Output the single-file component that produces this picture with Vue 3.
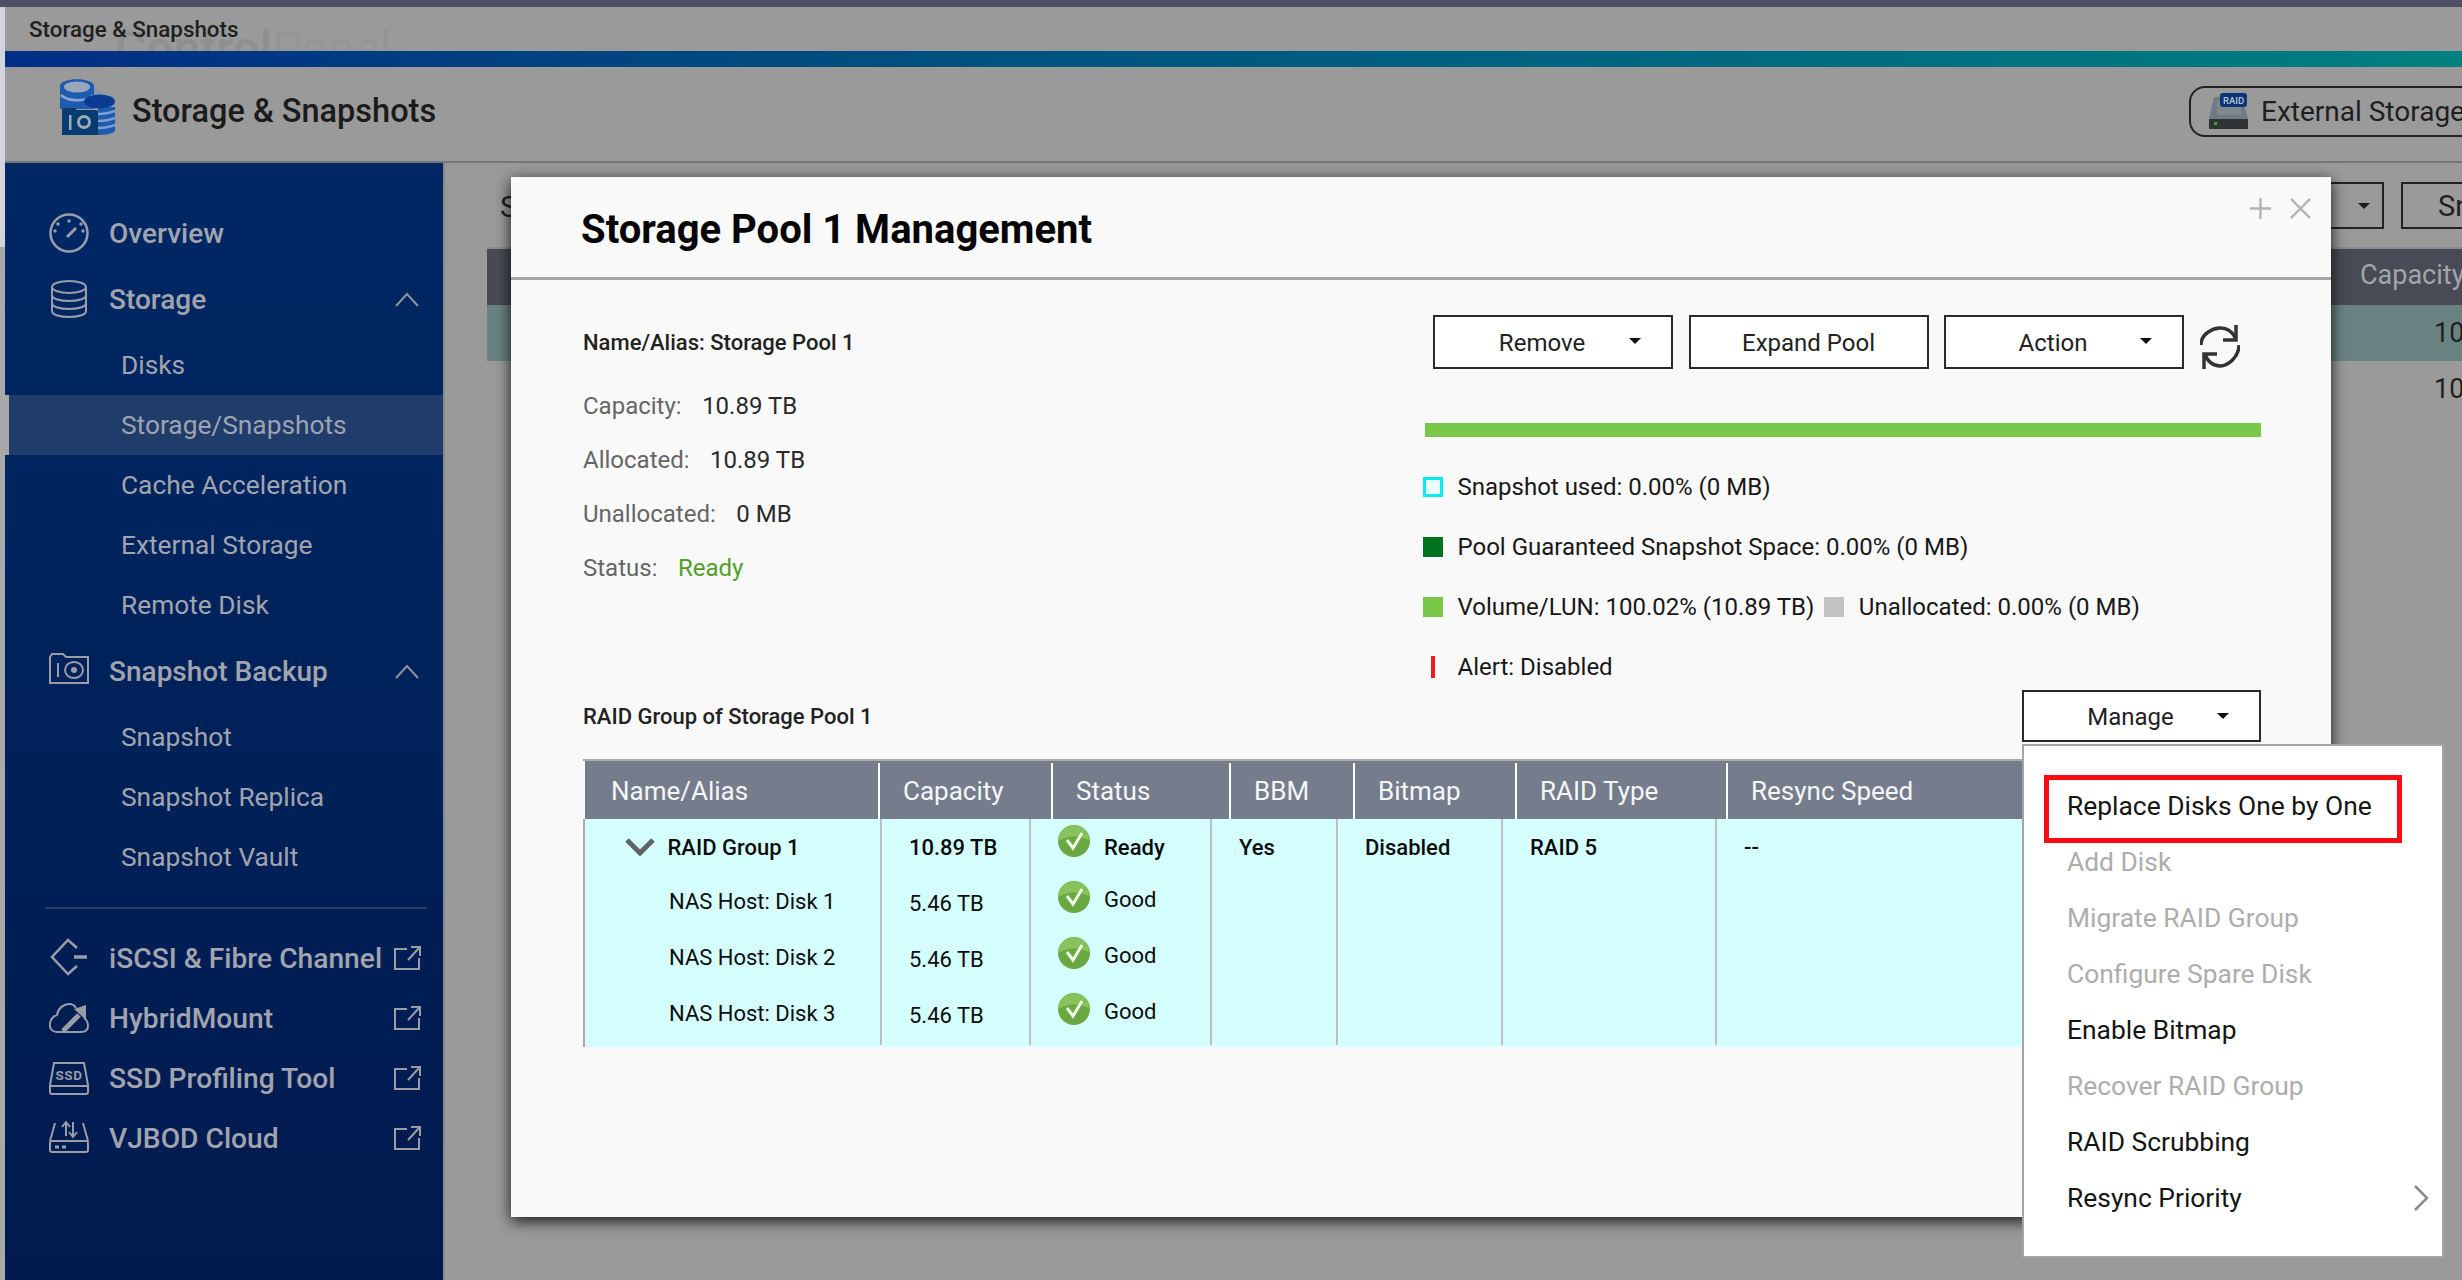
<template>
<div class="screen">
  <div class="top-strip"></div>
  <div class="desk">
    <div class="edge"></div>
    <div class="window">
      <div class="title-bar">
        <span class="watermark"><b>Control</b>Panel</span>
        <span class="title-text">Storage &amp; Snapshots</span>
      </div>
      <div class="accent"></div>
      <header class="app-head">
        <svg class="logo" viewBox="0 0 55 56">
          <path d="M30 6 L55 20 V30 H30 Z" fill="#8b98ab"/>
          <path d="M0 7 C0 -2 34 -2 34 7 V30 H0 Z" fill="#1d5bb0"/>
          <ellipse cx="17" cy="8" rx="13" ry="5.5" fill="#9aa6ba"/>
          <path d="M1 16 C8 23 27 23 33 16" stroke="#8ba5cf" stroke-width="2.5" fill="none"/>
          <path d="M38 28 H55 V52 C52 55 45 56 38 56 Z" fill="#1d5bb0"/>
          <path d="M38 35 C44 35 50 34 55 32 M38 42 C44 42 50 41 55 39 M38 49 C44 49 50 48 55 46" stroke="#7d9fce" stroke-width="2.5" fill="none"/>
          <ellipse cx="39.5" cy="22.5" rx="15.5" ry="7" fill="#0a3c94"/>
          <path d="M2 31 C2 30 3 29 4 29 H15 L17 31 H36 C37 31 38 32 38 33 V56 H2 Z" fill="#063c70"/>
          <rect x="9" y="36" width="2.5" height="15" fill="#a0aab5"/>
          <circle cx="24" cy="43" r="5.5" fill="none" stroke="#a0aab5" stroke-width="3"/>
        </svg>
        <span class="app-name">Storage &amp; Snapshots</span>
        <div class="ext-btn">
          <svg class="raid-icon" viewBox="0 0 40 36">
            <path d="M5 4 H33 L39 26 H0 Z" fill="#6f7b82"/>
            <rect x="8" y="8" width="24" height="14" fill="#7f8a8f"/>
            <rect x="0" y="26" width="39" height="10" fill="#2f3336"/>
            <rect x="5" y="29" width="3" height="3" fill="#39a82a"/>
            <rect x="11" y="0" width="27" height="14" rx="3" fill="#0c3577"/>
            <text x="24.5" y="11" class="raid-text">RAID</text>
          </svg>
          <span>External Storage</span>
        </div>
      </header>
      <div class="app-body">
        <nav class="sidebar">
          <template v-for="item in navItems" :key="item.label">
            <div v-if="item.kind === 'rule'" class="nav-rule"></div>
            <div v-else class="nav-row" :class="[item.kind, { active: item.active }]">
              <svg v-if="item.icon" class="nav-icon" viewBox="0 0 40 40" v-html="icons[item.icon]"></svg>
              <span class="nav-label">{{ item.label }}</span>
              <svg v-if="item.open" class="nav-chevron" viewBox="0 0 24 15"><path d="M1 14 L12 2 L23 14" fill="none" stroke="#8d92a1" stroke-width="2"/></svg>
              <svg v-if="item.ext" class="nav-ext" viewBox="0 0 28 26"><path d="M14 4 H2 V24 H26 V13 M15 15 L26 3 M18 2 H27 V11" fill="none" stroke="#9a9da6" stroke-width="2"/></svg>
            </div>
          </template>
        </nav>
        <main class="content">
          <div class="content-tools">
            <span class="tools-s">S</span>
            <div class="tool-box"><i class="caret"></i></div>
            <div class="tool-box wide">Sn</div>
          </div>
          <div class="back-head"><span>Capacity</span></div>
          <div class="back-row selected"><span>10.89 TB</span></div>
          <div class="back-row"><span>10.89 TB</span></div>
        </main>
      </div>
    </div>
  </div>

  <section class="modal">
    <div class="modal-head">
      <h1>Storage Pool 1 Management</h1>
      <div class="modal-ctrl">
        <svg viewBox="0 0 24 24"><path d="M12 1 V23 M1 12 H23" stroke="#b4b4b4" stroke-width="2.5"/></svg>
        <svg viewBox="0 0 24 24"><path d="M2 2 L22 22 M22 2 L2 22" stroke="#b4b4b4" stroke-width="2.5"/></svg>
      </div>
    </div>
    <div class="pool-top">
      <div class="info">
        <div class="info-name">Name/Alias: Storage Pool 1</div>
        <div v-for="row in poolInfo" :key="row.label" class="info-row">
          <span class="info-label">{{ row.label }}</span>
          <span :class="row.cls">{{ row.value }}</span>
        </div>
      </div>
      <div class="usage">
        <div class="actions">
          <button class="btn">Remove<i class="caret"></i></button>
          <button class="btn plain">Expand Pool</button>
          <button class="btn">Action<i class="caret"></i></button>
          <svg class="refresh" viewBox="0 0 40 46">
            <path d="M1 22 C1 10 14 5 20 5 C27 5 33 9 36 16" fill="none" stroke="#333" stroke-width="3.5"/>
            <path d="M36 2 V17 H23" fill="none" stroke="#333" stroke-width="3.5"/>
            <path d="M39 22 C39 34 28 43 20 43 C13 43 7 38 5 31" fill="none" stroke="#333" stroke-width="3.5"/>
            <path d="M4 46 V31 H17" fill="none" stroke="#333" stroke-width="3.5"/>
          </svg>
        </div>
        <div class="bar"></div>
        <div class="legend">
          <div class="legend-row"><i class="swatch snap"></i><span>Snapshot used: 0.00% (0 MB)</span></div>
          <div class="legend-row"><i class="swatch guar"></i><span>Pool Guaranteed Snapshot Space: 0.00% (0 MB)</span></div>
          <div class="legend-row">
            <i class="swatch vol"></i><span>Volume/LUN: 100.02% (10.89 TB)</span>
            <i class="swatch unal"></i><span>Unallocated: 0.00% (0 MB)</span>
          </div>
          <div class="legend-row"><i class="swatch alert"></i><span>Alert: Disabled</span></div>
        </div>
      </div>
    </div>
    <div class="raid-bar">
      <span class="info-name">RAID Group of Storage Pool 1</span>
      <button class="btn manage">Manage<i class="caret"></i></button>
    </div>
    <div class="raid-table">
      <div class="thead">
        <div v-for="h in headers" :key="h" class="th">{{ h }}</div>
      </div>
      <div class="tbody">
        <div class="col">
          <div class="cell group"><svg class="tree" viewBox="0 0 30 19"><path d="M2 2 L15 15 L28 2" fill="none" stroke="#5f6468" stroke-width="5"/></svg>RAID Group 1</div>
          <div v-for="d in disks" :key="d.name" class="cell disk">{{ d.name }}</div>
        </div>
        <div class="col">
          <div class="cell strong">10.89 TB</div>
          <div v-for="d in disks" :key="d.name" class="cell">{{ d.size }}</div>
        </div>
        <div class="col">
          <div class="cell state strong"><svg class="ok" viewBox="0 0 32 32" v-html="okIcon"></svg><span>Ready</span></div>
          <div v-for="d in disks" :key="d.name" class="cell state good"><svg class="ok" viewBox="0 0 32 32" v-html="okIcon"></svg><span>Good</span></div>
        </div>
        <div v-for="v in restCols" :key="v" class="col">
          <div class="cell strong">{{ v }}</div>
        </div>
        <div class="col last"></div>
      </div>
    </div>

    <div class="menu">
      <div v-for="m in manageMenu" :key="m.label" class="menu-item" :class="{ off: m.off }">
        {{ m.label }}
        <svg v-if="m.more" class="menu-more" viewBox="0 0 16 28"><path d="M2 2 L14 14 L2 26" fill="none" stroke="#8a8a8a" stroke-width="2.5"/></svg>
      </div>
      <div class="callout"></div>
    </div>
  </section>
</div>
</template>

<script setup>
const navItems = [
  { kind: 'head', label: 'Overview', icon: 'gauge' },
  { kind: 'head', label: 'Storage', icon: 'db', open: true },
  { kind: 'sub', label: 'Disks' },
  { kind: 'sub', label: 'Storage/Snapshots', active: true },
  { kind: 'sub', label: 'Cache Acceleration' },
  { kind: 'sub', label: 'External Storage' },
  { kind: 'sub', label: 'Remote Disk' },
  { kind: 'head', label: 'Snapshot Backup', icon: 'snap', open: true },
  { kind: 'sub', label: 'Snapshot' },
  { kind: 'sub', label: 'Snapshot Replica' },
  { kind: 'sub', label: 'Snapshot Vault' },
  { kind: 'rule', label: 'rule' },
  { kind: 'tool', label: 'iSCSI & Fibre Channel', icon: 'iscsi', ext: true },
  { kind: 'tool', label: 'HybridMount', icon: 'cloud', ext: true },
  { kind: 'tool', label: 'SSD Profiling Tool', icon: 'ssd', ext: true },
  { kind: 'tool', label: 'VJBOD Cloud', icon: 'vjbod', ext: true },
]

const stroke = '#9a9da8'
const st = `fill="none" stroke="${stroke}" stroke-width="2"`
const icons = {
  gauge: `<circle cx="20" cy="20" r="18.5" fill="none" stroke="${stroke}" stroke-width="2.5"/><g fill="${stroke}"><circle cx="20" cy="8" r="1.7"/><circle cx="9" cy="11" r="1.7"/><circle cx="32" cy="11" r="1.7"/><circle cx="6" cy="18" r="1.7"/><circle cx="34" cy="18" r="1.7"/></g><path d="M18 24L27 15" fill="none" stroke="${stroke}" stroke-width="3"/>`,
  db: `<ellipse cx="20" cy="8" rx="17" ry="6" ${st}/><path d="M3 8V32C3 40 37 40 37 32V8M3 16C3 24 37 24 37 16M3 24C3 32 37 32 37 24" ${st}/>`,
  snap: `<path d="M1 6V32H39V6H17L14 3H3L1 6Z" ${st}/><path d="M9 12V26" ${st}/><ellipse cx="25" cy="19" rx="9" ry="8" ${st}/><circle cx="25" cy="19" r="3" fill="${stroke}"/>`,
  iscsi: `<path d="M28 10L19 2L3 19L19 36L28 28" fill="none" stroke="${stroke}" stroke-width="2.5"/><path d="M25 19H38" fill="none" stroke="${stroke}" stroke-width="3.5"/>`,
  cloud: `<path d="M27 10C26 8 23 6 20 6C15 6 9 10 8 17C5 18 2 20 1 25C0 29 2 34 9 34H32C36 34 39 32 39 28C39 25 38 22 35 20" ${st}/><path d="M14 33L30 17" stroke="${stroke}" stroke-width="5"/><path d="M25 11L37 7V22Z" fill="${stroke}"/>`,
  ssd: `<path d="M5 5H35L39 27V34C39 35 38 36 37 36H3C2 36 1 35 1 34V27Z" ${st}/><path d="M1 28H39" ${st}/><text x="20" y="22" class="ssd-text">SSD</text>`,
  vjbod: `<path d="M6 5L1 23M34 5L39 23" ${st}/><rect x="1" y="23" width="38" height="11" rx="2" ${st}/><path d="M6 29H10M13 29H17" fill="none" stroke="${stroke}" stroke-width="3"/><path d="M17 18V5M13 9L17 4L21 9M24 4V18M20 14L24 19L28 14" ${st}/>`,
}

const okIcon = '<circle cx="16" cy="16" r="16" fill="#6aa842"/><path d="M0 16A16 16 0 0 1 32 16C22 10 10 10 0 16Z" fill="#86c25e"/><path d="M9 15L15 23L24 8" fill="none" stroke="#f2fbe8" stroke-width="3"/>'

const poolInfo = [
  { label: 'Capacity:', value: '10.89 TB' },
  { label: 'Allocated:', value: '10.89 TB' },
  { label: 'Unallocated:', value: '0 MB' },
  { label: 'Status:', value: 'Ready', cls: 'ready' },
]

const headers = ['Name/Alias', 'Capacity', 'Status', 'BBM', 'Bitmap', 'RAID Type', 'Resync Speed']
const disks = [
  { name: 'NAS Host: Disk 1', size: '5.46 TB' },
  { name: 'NAS Host: Disk 2', size: '5.46 TB' },
  { name: 'NAS Host: Disk 3', size: '5.46 TB' },
]
const restCols = ['Yes', 'Disabled', 'RAID 5', '--']

const manageMenu = [
  { label: 'Replace Disks One by One' },
  { label: 'Add Disk', off: true },
  { label: 'Migrate RAID Group', off: true },
  { label: 'Configure Spare Disk', off: true },
  { label: 'Enable Bitmap' },
  { label: 'Recover RAID Group', off: true },
  { label: 'RAID Scrubbing' },
  { label: 'Resync Priority', more: true },
]
</script>

<style scoped>
.screen {
  position: relative;
  width: 2462px;
  height: 1280px;
  overflow: hidden;
  display: flex;
  flex-direction: column;
  background: #9a9a9a;
  font-family: Roboto, "Liberation Sans", sans-serif;
  color: #1b1b1b;
}
.top-strip { height: 7px; background: #4f5068; flex: none; }
.desk { flex: 1; display: flex; min-height: 0; }
.edge { width: 5px; flex: none; background: linear-gradient(#d3d4dc 0, #d3d4dc 240px, #a9a9a9 240px); }
.window { flex: 1; display: flex; flex-direction: column; min-width: 0; }

.title-bar {
  position: relative;
  height: 44px;
  flex: none;
  display: flex;
  align-items: center;
  padding-left: 24px;
  overflow: hidden;
}
.title-text { position: relative; font-size: 22.4px; font-weight: 500; color: #1f1f1f; }
.watermark {
  position: absolute;
  left: 110px;
  top: 14px;
  font-size: 48px;
  line-height: 56px;
  color: #959595;
  white-space: nowrap;
}
.watermark b { color: #8f8f8f; font-weight: 500; }
.accent { height: 16px; flex: none; background: linear-gradient(90deg, #002d85, #004a80 30%, #008080 100%); }
.app-head {
  display: flex;
  align-items: center;
  padding: 0 0 6px 55px;
  border-bottom: 2px solid #777;
  box-sizing: border-box;
  height: 96px;
  flex: none;
}
.logo { width: 55px; height: 56px; flex: none; margin-bottom: 8px; }
.app-name { margin-left: 17px; font-size: 32.5px; font-weight: 500; color: #1b1b1b; }
.ext-btn {
  margin-left: auto;
  margin-right: -60px;
  width: 333px;
  height: 51px;
  box-sizing: border-box;
  border: 2px solid #222;
  border-radius: 16px 0 0 16px;
  display: flex;
  align-items: center;
  padding-left: 18px;
  font-size: 28px;
  color: #1f1f1f;
}
.raid-icon { width: 40px; height: 36px; margin-right: 12px; flex: none; }
.raid-text { font-size: 9.5px; font-weight: 500; fill: #b9c4dc; text-anchor: middle; font-family: Roboto, sans-serif; }

.app-body { flex: 1; display: flex; min-height: 0; }
.sidebar {
  width: 438px;
  flex: none;
  box-sizing: border-box;
  padding-top: 40px;
  background: linear-gradient(#002865, #001a4e);
  color: #a2a4ad;
}
.nav-row { display: flex; align-items: center; height: 60px; box-sizing: border-box; }
.nav-row.head { margin-bottom: 6px; padding-left: 44px; font-size: 28px; font-weight: 500; }
.nav-row.sub { padding-left: 116px; font-size: 26.3px; }
.nav-row.sub + .nav-row.head { margin-top: 6px; }
.nav-row.tool { padding-left: 44px; font-size: 28.2px; font-weight: 500; }
.nav-row.active { background: #203c6b; border-left: 4px solid #a8a8a8; padding-left: 112px; color: #9ea3b0; }
.nav-icon { width: 40px; height: 40px; flex: none; margin-right: 20px; }
.nav-label { white-space: nowrap; }
.nav-chevron { width: 24px; height: 15px; margin-left: auto; margin-right: 24px; }
.nav-ext { width: 28px; height: 26px; margin-left: auto; margin-right: 22px; flex: none; }
.nav-rule { height: 2px; margin: 20px 16px 19px 40px; background: #2a3a5e; }
:deep(.ssd-text) { font-size: 13.5px; font-weight: 700; fill: #9a9da8; text-anchor: middle; letter-spacing: 0.5px; font-family: Roboto, sans-serif; }

.content { flex: 1; min-width: 0; padding-left: 42px; border-left: 2px solid #8a8a8a; }
.content-tools { height: 84px; display: flex; align-items: flex-start; padding-top: 19px; box-sizing: border-box; }
.tools-s { font-size: 30px; margin-left: 13px; margin-top: 7px; color: #1f1f1f; }
.tool-box {
  margin-left: auto;
  width: 120px;
  height: 47px;
  box-sizing: border-box;
  border: 2px solid #222;
  display: flex;
  align-items: center;
  justify-content: flex-end;
  padding-right: 10px;
}
.tool-box .caret { position: static; border-top-color: #1b1b1b; margin-right: 2px; }
.tool-box.wide {
  margin-left: 17px;
  margin-right: -70px;
  width: 131px;
  justify-content: flex-start;
  padding-left: 35px;
  font-size: 29px;
  color: #1f1f1f;
}
.back-head {
  height: 58px;
  box-sizing: border-box;
  background: #484b55;
  color: #a4a5a9;
  font-size: 27px;
  display: flex;
  align-items: center;
  padding: 0 0 5px 1873px;
  border-top: 2px solid #8a8a8a;
  white-space: nowrap;
}
.back-row {
  height: 56px;
  box-sizing: border-box;
  display: flex;
  align-items: center;
  padding: 0 0 0 1947px;
  font-size: 27px;
  white-space: nowrap;
  color: #1f1f1f;
}
.back-row.selected { background: #6a8382; }

.modal {
  position: absolute;
  left: 511px;
  top: 177px;
  width: 1820px;
  height: 1040px;
  background: #f9f9f9;
  box-shadow: 0 4px 14px rgba(0, 0, 0, 0.85);
}
.modal-head {
  height: 100px;
  border-bottom: 3px solid #a5a5a5;
  display: flex;
  align-items: flex-start;
  justify-content: space-between;
  box-sizing: content-box;
}
.modal-head h1 {
  margin: 29px 0 0 70px;
  font-size: 40px;
  line-height: 48px;
  font-weight: 700;
  color: #050505;
}
.modal-ctrl { display: flex; gap: 17px; margin: 20px 19px 0 0; }
.modal-ctrl svg { width: 23px; height: 23px; }

.pool-top { height: 410px; display: flex; padding-left: 72px; }
.info { width: 842px; flex: none; padding-top: 35px; font-size: 24px; }
.info-name { font-size: 22px; font-weight: 500; color: #222; }
.info > .info-name { height: 54px; display: flex; align-items: center; margin-bottom: 10px; white-space: nowrap; }
.info-row { height: 54px; display: flex; align-items: center; gap: 20.5px; color: #2a2a2a; }
.info-label { color: #666; }
.ready { color: #52a028; }
.usage { width: 836px; flex: none; padding-top: 35px; }
.actions { display: flex; gap: 15.5px; padding-left: 8px; align-items: flex-start; height: 54px; }
.btn {
  position: relative;
  width: 240px;
  height: 54px;
  box-sizing: border-box;
  border: 2px solid #2a2a2a;
  background: #fff;
  font: 400 24px Roboto, sans-serif;
  color: #222;
  display: flex;
  align-items: center;
  justify-content: center;
  padding: 2px 22px 0 0;
  flex: none;
}
.btn.plain { padding: 2px 0 0; }
.caret {
  position: absolute;
  right: 30px;
  top: 21px;
  width: 0;
  height: 0;
  border-left: 6px solid transparent;
  border-right: 6px solid transparent;
  border-top: 6px solid #111;
}
.refresh { width: 40px; height: 46px; margin-top: 8px; flex: none; }
.bar { height: 14px; margin-top: 54px; background: #7ac84a; }
.legend { margin-top: 30px; display: flex; flex-direction: column; gap: 20px; font-size: 24px; color: #181818; }
.legend-row { height: 40px; display: flex; align-items: center; white-space: nowrap; }
.swatch { width: 20px; height: 20px; flex: none; box-sizing: border-box; margin: 0 14.5px 0 -2px; }
.swatch.snap { border: 3px solid #00f0f0; background: #eafcfc; }
.swatch.guar { background: #00731f; }
.swatch.vol { background: #7ac84a; }
.swatch.unal { background: #c2c2c2; margin-left: 10px; }
.swatch.alert { width: 4px; height: 22px; background: #ee1c25; margin: 0 22.5px 0 6px; }

.raid-bar { height: 52px; display: flex; align-items: center; justify-content: space-between; padding: 0 70px 0 72px; }
.btn.manage { width: 239px; height: 52px; }
.raid-table { margin: 17px 71px 0 72px; border-top: 2px solid #aaa; }
.thead {
  height: 58px;
  background: #757d8c;
  margin-left: 2px;
  display: grid;
  grid-template-columns: 295px 173px 178px 124px 162px 211px 1fr;
  color: #f4f6f8;
  font-size: 26px;
}
.th {
  margin-top: 2px;
  border-right: 2px solid #fff;
  padding-left: 23px;
  display: flex;
  align-items: center;
  white-space: nowrap;
}
.th:first-child { padding-left: 26px; }
.th:last-child { border-right: none; }
.tbody {
  height: 228px;
  background: #d5ffff;
  border-left: 2px solid #aaa;
  display: grid;
  grid-template-columns: 297px 149px 181px 126px 165px 214px 1fr;
  font-size: 22px;
  color: #0c0c0c;
}
.col { border-right: 2px solid #bcc0c0; padding-left: 27px; min-width: 0; }
.col.last { border-right: none; }
.cell { height: 56px; display: flex; align-items: center; white-space: nowrap; box-sizing: border-box; }
.strong { font-weight: 500; }
.cell.group { font-weight: 500; padding-left: 13px; }
.tree { width: 30px; height: 19px; margin-right: 12.5px; flex: none; }
.cell.disk { padding: 0 0 4px 57px; }
.ok { width: 32px; height: 32px; flex: none; margin: 0 14px 12px 0; }
.cell.good span { margin-bottom: 8px; }

.menu {
  position: absolute;
  left: 1511px;
  top: 567px;
  width: 422px;
  height: 514px;
  box-sizing: border-box;
  border: 2px solid #a5a5a5;
  background: #fff;
  padding: 32px 0 0 43px;
  font-size: 26.4px;
  color: #151515;
}
.menu-item { position: relative; height: 56px; display: flex; align-items: center; white-space: nowrap; }
.menu-item.off { color: #adadad; }
.menu-more { position: absolute; right: 13px; top: 14px; width: 16px; height: 28px; }
.callout {
  position: absolute;
  left: 20px;
  top: 29px;
  width: 358px;
  height: 68px;
  box-sizing: border-box;
  border: 5px solid #ff0a14;
}
</style>

<style>
html, body { margin: 0; overflow: hidden; background: #9a9a9a; }
</style>
